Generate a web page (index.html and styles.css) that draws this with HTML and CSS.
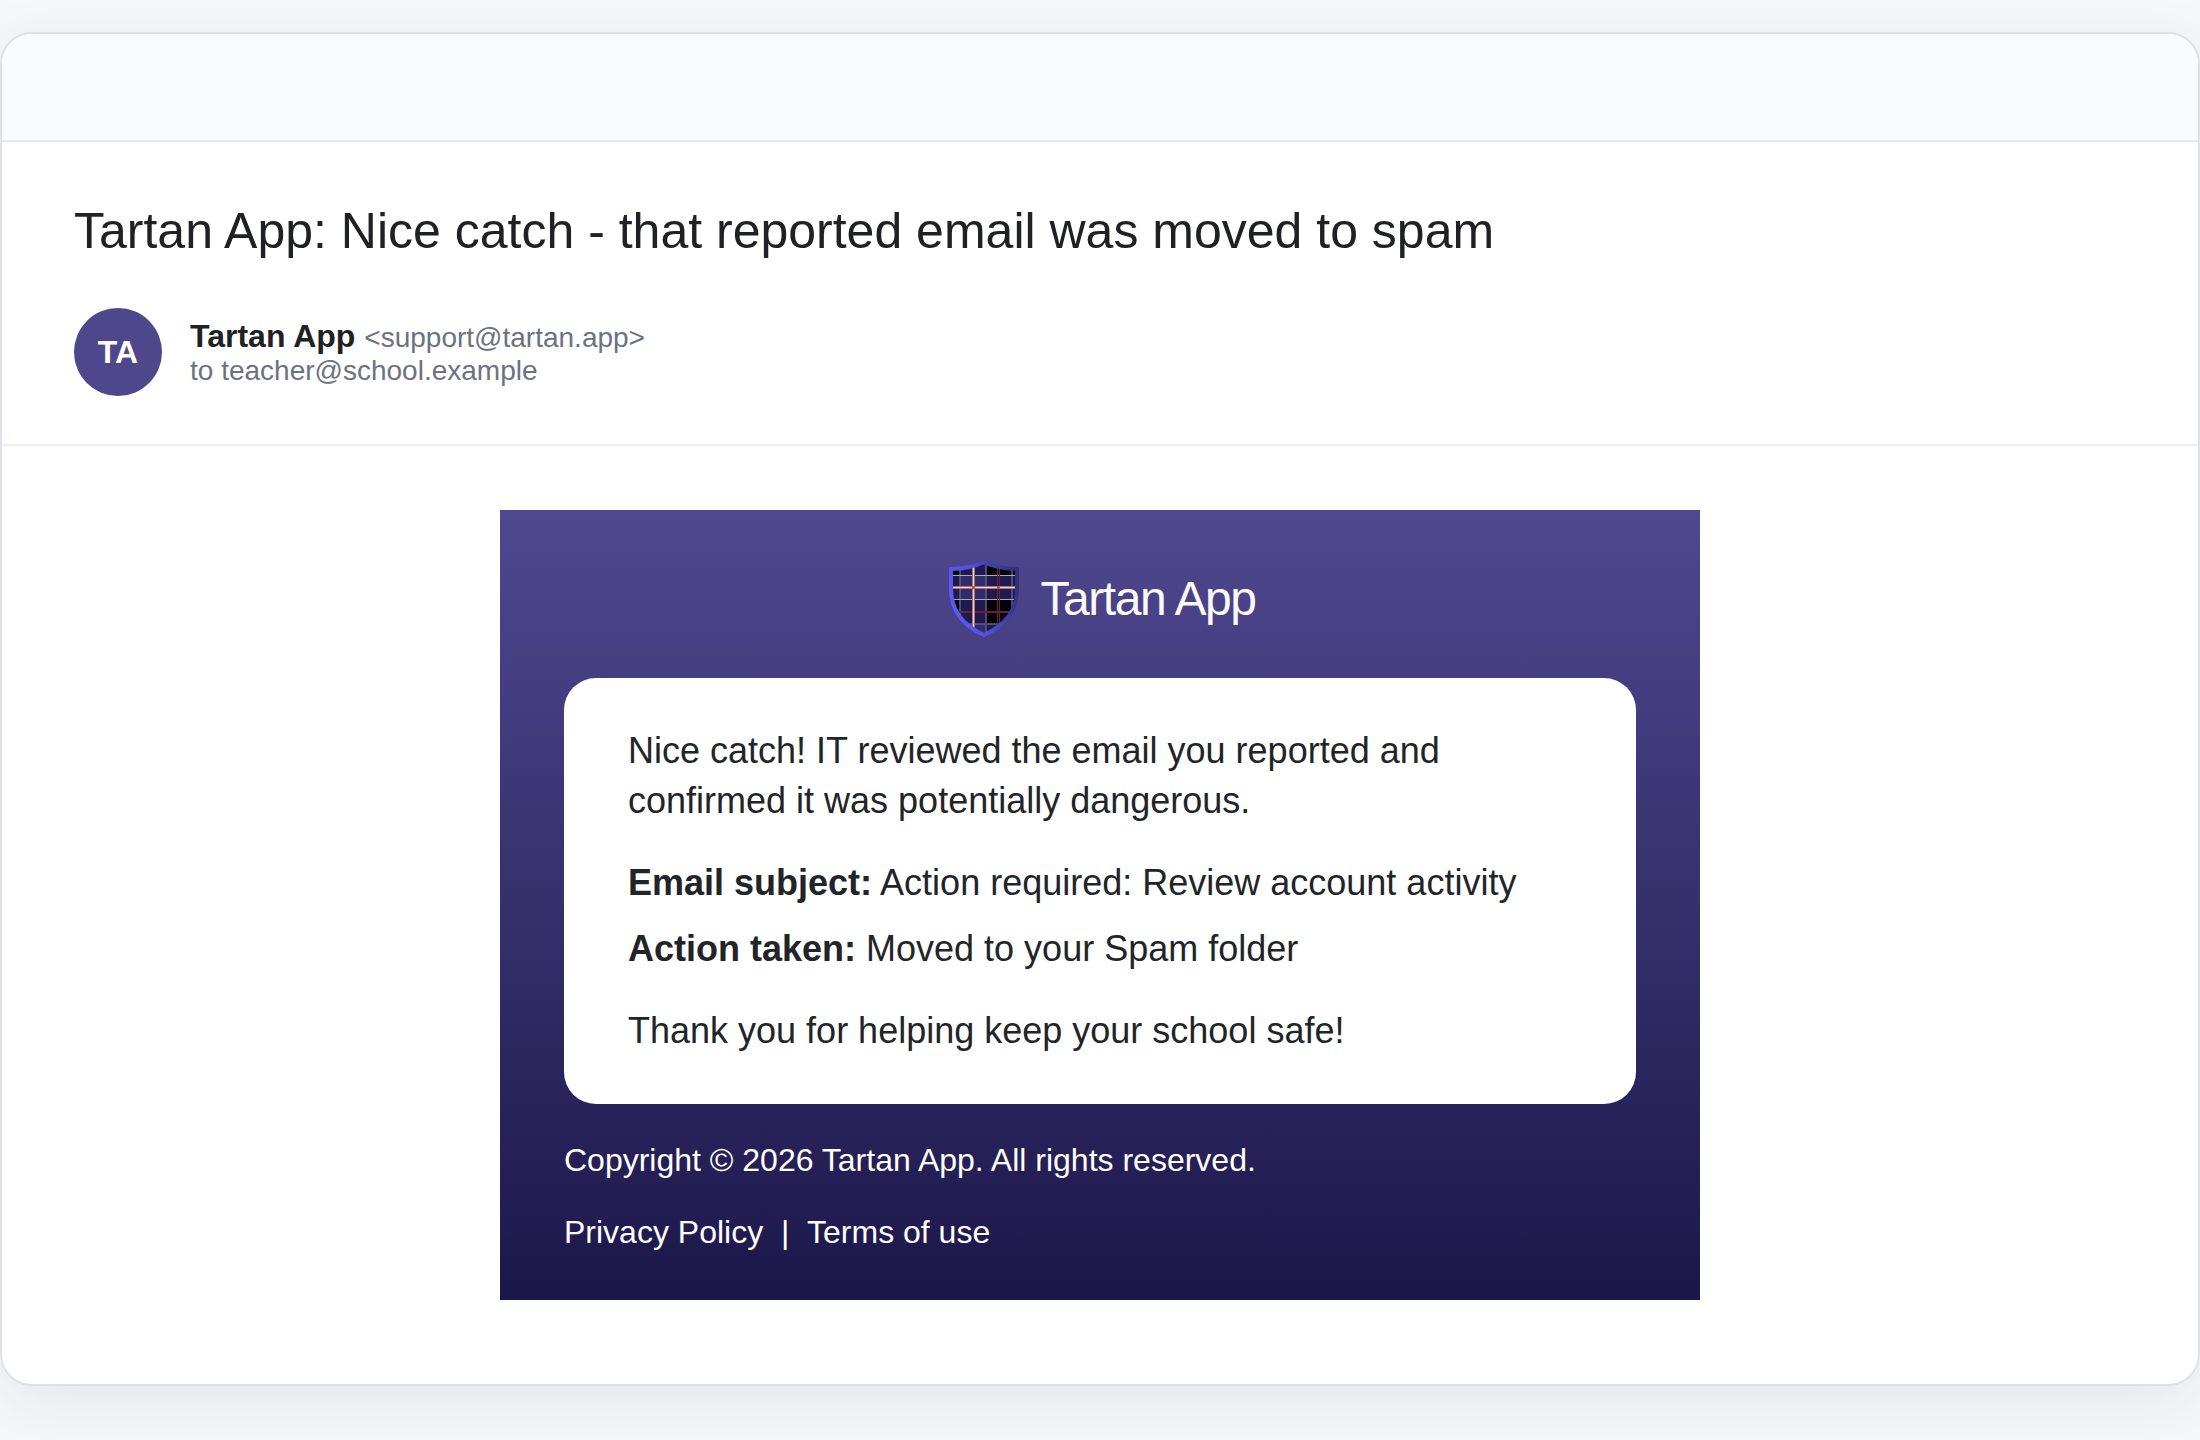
FILE: index.html
```html
<!DOCTYPE html>
<html lang="en">
<head>
  <meta charset="UTF-8">
  <meta name="viewport" content="width=device-width, initial-scale=1.0">
  <title>Tartan App: Nice catch - that reported email was moved to spam</title>
  <link rel="stylesheet" href="styles.css">
</head>
<body>
  <main class="mail-window">
    <div class="mail-toolbar"></div>

    <header class="mail-header">
      <h1 class="mail-subject">Tartan App: Nice catch - that reported email was moved to spam</h1>
      <div class="sender">
        <div class="avatar">TA</div>
        <div class="sender-info">
          <div class="sender-line"><span class="sender-name">Tartan App</span> <span class="sender-email">&lt;support@tartan.app&gt;</span></div>
          <div class="recipient">to teacher@school.example</div>
        </div>
      </div>
    </header>

    <div class="mail-body">
      <article class="email">
        <div class="brand">
          <svg class="brand-logo" viewBox="0 0 80 80" aria-hidden="true">
            <defs>
              <linearGradient id="rim" x1="0" y1="0.6" x2="1" y2="0.3">
                <stop offset="0" stop-color="#5b5bf5"/>
                <stop offset="0.45" stop-color="#4f4fdc"/>
                <stop offset="1" stop-color="#30307c"/>
              </linearGradient>
              <clipPath id="shield">
                <path d="M7 11C20 11 30 9 40 4C50 9 60 11 73 11V31C73 53 60 68 40 77C20 68 7 53 7 31Z"/>
              </clipPath>
            </defs>
            <g clip-path="url(#shield)">
              <path fill="#050308" d="M0 0h80v80H0z"/>
              <!-- weft and warp bands -->
              <path fill="#1e1a50" d="M0 17h80v24H0zM0 66h80v14H0zM16 0h26v80H16z"/>
              <path fill="#2e2d69" d="M16 17h26v24H16zM16 66h26v14H16z"/>
              <path fill="#626080" fill-opacity="0.75" d="M15 0h2v80h-2zM41 0h2v80h-2zM67 0h2v80h-2zM0 65h80v2H0z"/>
              <path fill="#a9a8b8" d="M0 17h80v1H0zM0 41h80v1H0z"/>
              <path fill="#6b2038" d="M53 0h1v80h-1zM55 0h1v80h-1zM0 53h80v2H0zM0 5h80v2H0z"/>
              <path fill="#b66f78" d="M28 0h3v80h-3zM0 28h80v3H0z"/>
              <path fill="#ded5c9" d="M29 0h1v80h-1zM0 29h80v1H0z"/>
              <path fill="#b05060" d="M28 28h3v3h-3zM53 28h3v3h-3z"/>
            </g>
            <path fill="none" stroke="url(#rim)" stroke-width="4" stroke-linejoin="round" d="M7 11C20 11 30 9 40 4C50 9 60 11 73 11V31C73 53 60 68 40 77C20 68 7 53 7 31Z"/>
          </svg>
          <span class="brand-name">Tartan App</span>
        </div>

        <section class="message">
          <p>Nice catch! IT reviewed the email you reported and confirmed it was potentially dangerous.</p>
          <dl class="details">
            <div><dt>Email subject:</dt><dd> Action required: Review account activity</dd></div>
            <div><dt>Action taken:</dt><dd> Moved to your Spam folder</dd></div>
          </dl>
          <p>Thank you for helping keep your school safe!</p>
        </section>

        <footer class="email-footer">
          <p>Copyright © 2026 Tartan App. All rights reserved.</p>
          <p><a href="#">Privacy Policy</a>&nbsp; | &nbsp;<a href="#">Terms of use</a></p>
        </footer>
      </article>
    </div>
  </main>
</body>
</html>
```

FILE: styles.css
```css
* {
  box-sizing: border-box;
}

body {
  min-height: 100vh;
  margin: 0;
  padding: 32px 0;
  background: #f5f7fb;
  color: #202124;
  font-family: "Liberation Sans", Arial, Helvetica, sans-serif;
}

h1, p, dl, dd {
  margin: 0;
}

.mail-window {
  background: #fff;
  border: 2px solid #dfe1e8;
  border-radius: 32px;
  box-shadow: 0 16px 64px rgba(32, 33, 36, 0.08);
  overflow: hidden;
}

.mail-toolbar {
  height: 108px;
  background: #fafbfe;
  border-bottom: 2px solid #e6e8ef;
}

.mail-header {
  padding: 56px 72px 48px;
  border-bottom: 2px solid #edf0f4;
}

.mail-subject {
  margin-bottom: 44px;
  font-size: 50px;
  font-weight: 400;
  line-height: 66px;
}

.sender {
  display: flex;
  align-items: center;
  gap: 28px;
}

.avatar {
  display: flex;
  align-items: center;
  justify-content: center;
  flex: none;
  width: 88px;
  height: 88px;
  border-radius: 50%;
  background: #4f478c;
  color: #fff;
  font-size: 32px;
  font-weight: 700;
}

.sender-line {
  display: flex;
  flex-wrap: wrap;
  align-items: baseline;
  column-gap: 9px;
}

.sender-name {
  font-size: 32px;
  font-weight: 700;
}

.sender-email,
.recipient {
  color: #6b7280;
  font-size: 28px;
}

.mail-body {
  padding: 64px 48px 84px;
}

.email {
  max-width: 1200px;
  margin: 0 auto;
  padding: 48px 64px;
  background: linear-gradient(#50488f, #1c174a);
}

.brand {
  display: flex;
  align-items: center;
  justify-content: center;
  gap: 16px;
  margin-bottom: 40px;
}

.brand-logo {
  width: 80px;
  height: 80px;
}

.brand-name {
  color: #fafafa;
  font-size: 48px;
  letter-spacing: -0.03em;
}

.message {
  padding: 48px 64px;
  border-radius: 32px;
  background: #fff;
  color: #212529;
  font-size: 36px;
  line-height: 50px;
}

.details {
  display: grid;
  gap: 16px;
  margin: 32px 0;
}

.details dt,
.details dd {
  display: inline;
}

.details dt {
  font-weight: 700;
}

.email-footer {
  display: grid;
  gap: 32px;
  padding-top: 36px;
  color: #fff;
  font-size: 32px;
  line-height: 40px;
}

.email-footer a {
  color: inherit;
  text-decoration: none;
}
```
